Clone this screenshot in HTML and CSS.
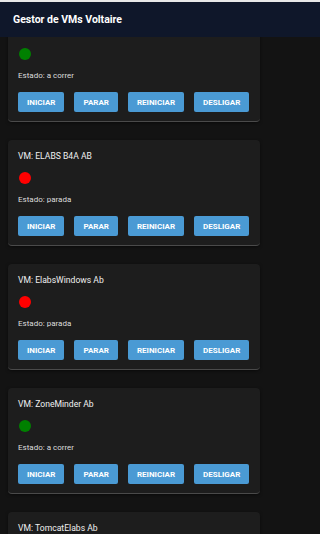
FILE: index.html
```html
<!DOCTYPE html>
<html lang="pt">
<head>
    <title>Gestor de VMs Voltaire</title>
    <link rel="stylesheet" href="styles.css">
</head>
<body>
    <div class="banner">Gestor de VMs Voltaire</div>

    <div class="vm-list">
        <div class="vm-card">
            <h3>VM: DebianServer Ab</h3>
            <div class="status-dot running"></div>
            <p class="status">Estado: a correr</p>
            <div class="actions">
                <button>Iniciar</button>
                <button>Parar</button>
                <button>Reiniciar</button>
                <button>Desligar</button>
            </div>
        </div>
        <div class="vm-card">
            <h3>VM: ELABS B4A AB</h3>
            <div class="status-dot stopped"></div>
            <p class="status">Estado: parada</p>
            <div class="actions">
                <button>Iniciar</button>
                <button>Parar</button>
                <button>Reiniciar</button>
                <button>Desligar</button>
            </div>
        </div>
        <div class="vm-card">
            <h3>VM: ElabsWindows Ab</h3>
            <div class="status-dot stopped"></div>
            <p class="status">Estado: parada</p>
            <div class="actions">
                <button>Iniciar</button>
                <button>Parar</button>
                <button>Reiniciar</button>
                <button>Desligar</button>
            </div>
        </div>
        <div class="vm-card">
            <h3>VM: ZoneMinder Ab</h3>
            <div class="status-dot running"></div>
            <p class="status">Estado: a correr</p>
            <div class="actions">
                <button>Iniciar</button>
                <button>Parar</button>
                <button>Reiniciar</button>
                <button>Desligar</button>
            </div>
        </div>
        <div class="vm-card">
            <h3>VM: TomcatElabs Ab</h3>
            <div class="status-dot stopped"></div>
            <p class="status">Estado: parada</p>
            <div class="actions">
                <button>Iniciar</button>
                <button>Parar</button>
                <button>Reiniciar</button>
                <button>Desligar</button>
            </div>
        </div>
    </div>
</body>
</html>
```

FILE: styles.css
```css
html, body {
    margin: 0;
    padding: 0;
}

body {
    font-family: Roboto, Arial, sans-serif;
    background-color: #131313;
    color: #e6e6e6;
    overflow: hidden;
}

.banner {
    position: fixed;
    top: 0;
    left: 0;
    right: 0;
    height: 35px;
    border-top: 2px solid #e8e8e8;
    background-color: #0f172a;
    color: #fff;
    font-size: 10.5px;
    font-weight: bold;
    line-height: 35px;
    padding-left: 13px;
    z-index: 1;
}

.vm-list {
    display: flex;
    flex-direction: column;
    gap: 18px;
    padding: 16px 8px;
}

.vm-card {
    width: 252px;
    box-sizing: border-box;
    background-color: #1d1d1d;
    border-radius: 4px;
    padding: 11px 10px 9px;
    border-bottom: 1px solid #4a4a4a;
    box-shadow: 0 1px 3px rgba(0, 0, 0, 0.5);
}

.vm-card h3 {
    margin: 0 0 10px;
    font-size: 8.6px;
    font-weight: normal;
    line-height: 11px;
    color: #f0f0f0;
}

.status-dot {
    width: 12px;
    height: 12px;
    border-radius: 50%;
    margin-left: 1px;
}

.status-dot.running {
    background-color: #008000;
}

.status-dot.stopped {
    background-color: #ff0000;
}

.status {
    margin: 11px 0;
    font-size: 8px;
    line-height: 10px;
    color: #dcdcdc;
}

.actions {
    display: flex;
    gap: 10px;
}

.actions button {
    height: 20px;
    padding: 0 9px;
    background-color: #4a9ad4;
    color: #fff;
    border: none;
    border-radius: 2px;
    font-family: Roboto, Arial, sans-serif;
    font-size: 8px;
    font-weight: bold;
    text-transform: uppercase;
    cursor: pointer;
}

.actions button:hover {
    background-color: #3f8bc2;
}
```
